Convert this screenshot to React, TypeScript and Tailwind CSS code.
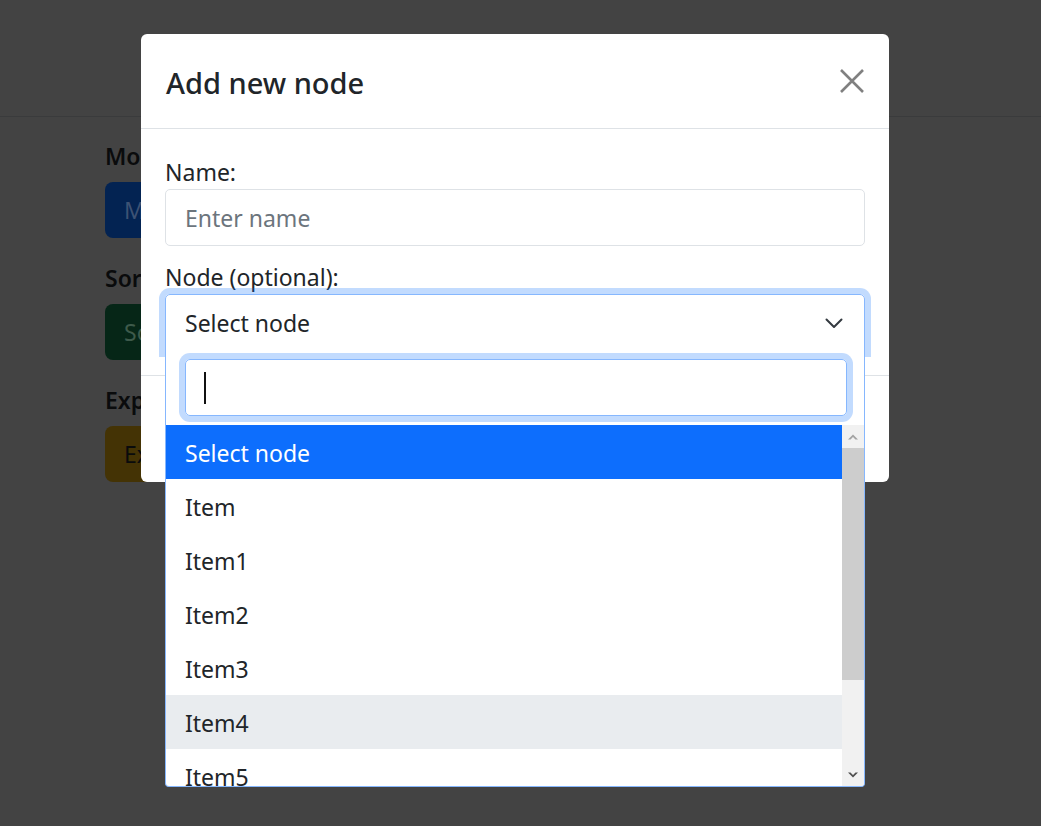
import React from "react";

const items = ["Item", "Item1", "Item2", "Item3", "Item4", "Item5"];

function Chevron() {
  return (
    <svg width="18" height="12" viewBox="0 0 18 12" fill="none">
      <path d="M1.5 2.5l7.5 7.5 7.5-7.5" stroke="#343a40" strokeWidth="2" strokeLinecap="round" strokeLinejoin="round" />
    </svg>
  );
}

export default function App() {
  return (
    <div
      className="relative w-[1041px] h-[826px] overflow-hidden bg-[#434343] text-[#212529]"
      style={{ fontFamily: '"Noto Sans", "Open Sans", sans-serif' }}
    >
      {/* background page (dimmed) */}
      <div className="h-[117px] border-b border-[#3a3b3c]" />
      <div className="pl-[105px] pt-[21px] flex flex-col">
        <div className="text-[23px] leading-[36px] font-semibold text-[#0a0b0c]">Modes</div>
        <div className="mt-[8px] h-[56px] w-[200px] rounded-[8px] bg-[#032352] text-[#3d5274] text-[23px] leading-[56px] pl-[19px]">Manage</div>
        <div className="mt-[22px] text-[23px] leading-[36px] font-semibold text-[#0a0b0c]">Sort</div>
        <div className="mt-[8px] h-[56px] w-[200px] rounded-[8px] bg-[#062617] text-[#3e5a4b] text-[23px] leading-[56px] pl-[19px]">Sort</div>
        <div className="mt-[22px] text-[23px] leading-[36px] font-semibold text-[#0a0b0c]">Export</div>
        <div className="mt-[8px] h-[56px] w-[200px] rounded-[8px] bg-[#443305] text-[#0a0b0c] text-[23px] leading-[56px] pl-[19px]">Export</div>
      </div>

      {/* modal */}
      <div className="absolute left-[141px] top-[34px] w-[748px] h-[448px] bg-white rounded-[6px] flex flex-col">
        <div className="h-[95px] border-b border-[#dee2e6] flex items-center justify-between pl-[25px] pr-[25px]">
          <div className="text-[29px] leading-[45px] font-medium text-[#212529] pt-[2px]">Add new node</div>
          <svg width="24" height="24" viewBox="0 0 24 24">
            <path d="M1 1L23 23M23 1L1 23" stroke="#808080" strokeWidth="2.6" />
          </svg>
        </div>
        <div className="px-[24px] pt-[24px] pb-[24px] border-b border-[#dee2e6] flex flex-col">
          <label className="text-[23px] leading-[36px] pt-[1px] h-[36px]">Name:</label>
          <div className="h-[57px] border border-[#dee2e6] rounded-[5px] flex items-center pl-[19px] pt-[2px] text-[23px] text-[#6c757d]">
            Enter name
          </div>
          <label className="mt-[12px] text-[23px] leading-[36px] pt-[1px] h-[36px]">Node (optional):</label>
          <div className="relative">
            <div className="h-[57px] border border-[#86b7fe] rounded-t-[5px] shadow-[0_0_0_6px_rgba(13,110,253,0.25)] flex items-center justify-between pl-[19px] pr-[21px] text-[23px]">
              <span className="pt-[2px]">Select node</span>
              <Chevron />
            </div>
            {/* dropdown */}
            <div className="absolute left-0 right-0 top-[56px] z-10 bg-white border border-t-0 border-[#86b7fe] rounded-b-[4px] flex flex-col overflow-hidden">
              <div className="pt-[9px] pb-[9px] pl-[19px] pr-[17px]">
                <div className="h-[57px] border border-[#86b7fe] rounded-[5px] shadow-[0_0_0_6px_rgba(13,110,253,0.25)] flex items-center pl-[18px]">
                  <div className="w-[2px] h-[32px] bg-[#111]" />
                </div>
              </div>
              <div className="flex h-[361px]">
                <div className="flex-1 flex flex-col overflow-hidden">
                  {["Select node", ...items].map((t, i) => (
                    <div
                      key={t}
                      className={
                        "shrink-0 h-[54px] pl-[19px] pt-[3px] text-[23px] leading-[51px] " +
                        (i === 0 ? "bg-[#0d6efd] text-white" : i === 5 ? "bg-[#e9ecef]" : "")
                      }
                    >
                      {t}
                    </div>
                  ))}
                </div>
                <div className="w-[22px] bg-[#f1f1f1] flex flex-col">
                  <div className="h-[23px] flex items-center justify-center">
                    <svg width="10" height="6" viewBox="0 0 10 6">
                      <path d="M0 5.5L5 0.5L10 5.5H7.5L5 3L2.5 5.5Z" fill="#a3a3a3" />
                    </svg>
                  </div>
                  <div className="h-[232px] bg-[#cdcdcd]" />
                  <div className="flex-1" />
                  <div className="h-[23px] flex items-center justify-center">
                    <svg width="10" height="6" viewBox="0 0 10 6">
                      <path d="M0 0.5L5 5.5L10 0.5H7.5L5 3L2.5 0.5Z" fill="#505050" />
                    </svg>
                  </div>
                </div>
              </div>
            </div>
          </div>
        </div>
        <div className="flex-1" />
      </div>
    </div>
  );
}
